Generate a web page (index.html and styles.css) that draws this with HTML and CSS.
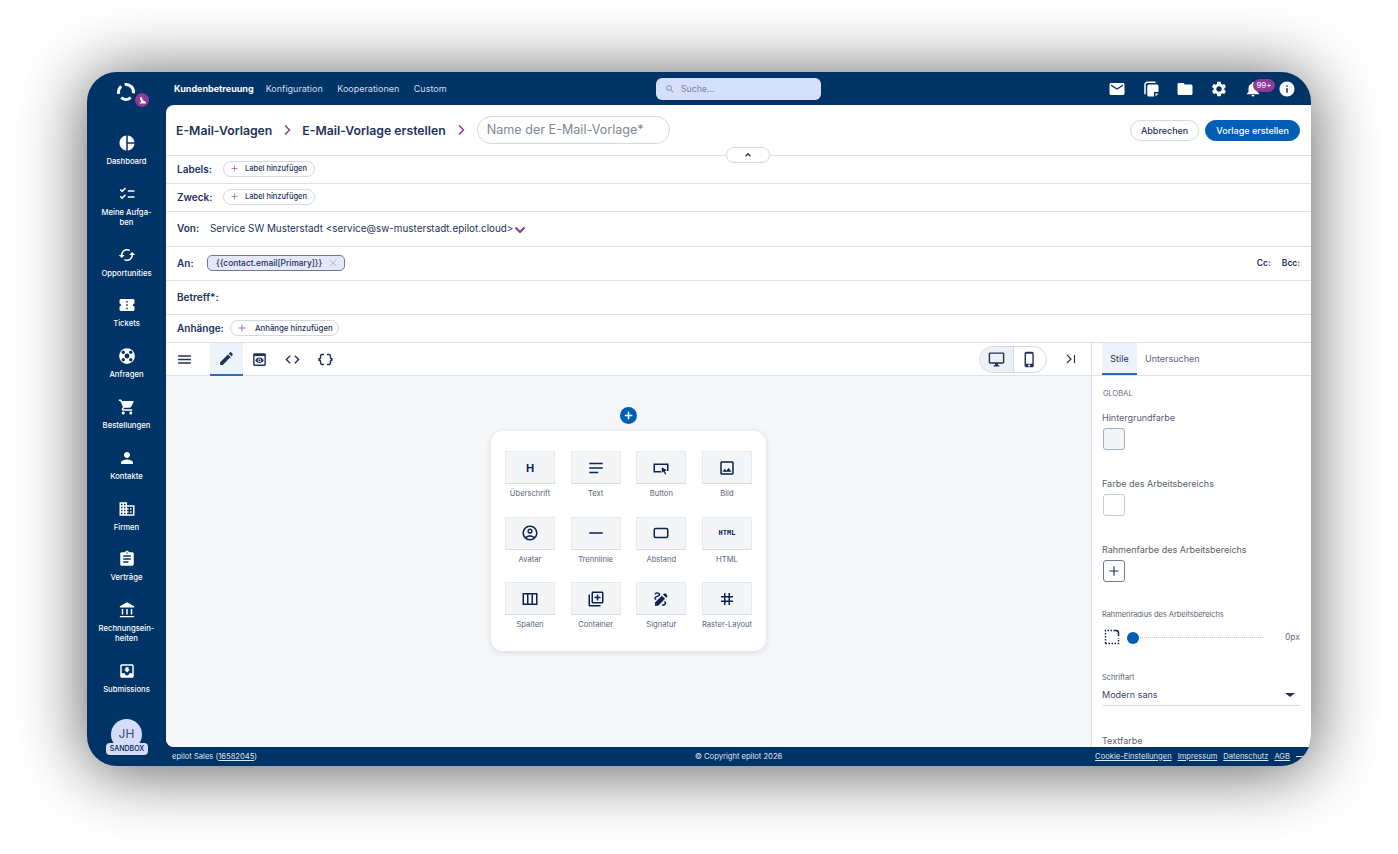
FILE: index.html
```html
<!doctype html>
<html lang="de">
<head>
    <meta charset="UTF-8">
    <title>E-Mail-Vorlage erstellen</title>
    <link rel="stylesheet" href="styles.css">
</head>
<body>
<div class="window">
    <aside class="sidebar">
        <div class="logo">
            <svg class="logo-ring" viewBox="0 0 24 24"><path d="M10.700 4.600A7.500 7.500 0 0 1 19.400 13.300M16.800 17.700A7.500 7.500 0 0 1 7.200 17.700M4.800 13.900A7.500 7.500 0 0 1 7.200 6.300"/></svg>
            <span class="logo-badge"><svg viewBox="0 0 24 24"><path d="M6 3h4l3 8 7 4c2 1 2 5 0 5H6c-2 0-2-3 0-3l3-1-4-9z"/></svg></span>
        </div>
        <nav class="nav">
            <a class="nav-item"><svg viewBox="0 0 24 24"><path d="M11 2v20c-5.070-.5-9-4.790-9-10s3.930-9.500 9-10zm2.030 0v8.990H22c-.47-4.740-4.240-8.520-8.970-8.990zm0 11.010V22c4.740-.47 8.500-4.250 8.970-8.990h-8.970z"/></svg><span>Dashboard</span></a>
            <a class="nav-item"><svg class="line-icon" viewBox="0 0 24 24"><path d="M3 6l2.500 2.500L10 4M3 15l2.500 2.500L10 13M13 8h9M13 16h9"/></svg><span>Meine Aufga-<br>ben</span></a>
            <a class="nav-item"><svg viewBox="0 0 24 24"><path d="M19 8l-4 4h3c0 3.310-2.690 6-6 6-1.010 0-1.970-.25-2.800-.7l-1.460 1.460C8.970 19.540 10.430 20 12 20c4.420 0 8-3.580 8-8h3l-4-4zM6 12c0-3.310 2.690-6 6-6 1.010 0 1.970.25 2.800.7l1.460-1.460C15.030 4.460 13.570 4 12 4c-4.420 0-8 3.580-8 8H1l4 4 4-4H6z"/></svg><span>Opportunities</span></a>
            <a class="nav-item"><svg viewBox="0 0 24 24"><path d="M22 10V6c0-1.110-.9-2-2-2H4c-1.100 0-1.990.89-1.990 2v4c1.100 0 1.990.9 1.990 2s-.89 2-2 2v4c0 1.100.9 2 2 2h16c1.100 0 2-.9 2-2v-4c-1.100 0-2-.9-2-2s.9-2 2-2zm-9 7.500h-2v-2h2v2zm0-4.500h-2v-2h2v2zm0-4.500h-2v-2h2v2z"/></svg><span>Tickets</span></a>
            <a class="nav-item"><svg viewBox="0 0 24 24"><circle cx="12" cy="12" r="10.500" fill="#fff"/><g fill="#003366"><circle cx="12" cy="12" r="3.200"/><circle cx="7" cy="7" r="2.200"/><circle cx="17" cy="7" r="2.200"/><circle cx="7" cy="17" r="2.200"/><circle cx="17" cy="17" r="2.200"/></g></svg><span>Anfragen</span></a>
            <a class="nav-item"><svg viewBox="0 0 24 24"><path d="M7 18c-1.100 0-1.990.9-1.990 2S5.900 22 7 22s2-.9 2-2-.9-2-2-2zM1 2v2h2l3.600 7.590-1.350 2.450c-.16.28-.25.61-.25.96 0 1.100.9 2 2 2h12v-2H7.420c-.14 0-.25-.11-.25-.25l.03-.12.9-1.630h7.450c.75 0 1.410-.41 1.750-1.030l3.580-6.490c.08-.14.12-.31.12-.48 0-.55-.45-1-1-1H5.210l-.94-2H1zm16 16c-1.100 0-1.990.9-1.990 2s.89 2 1.990 2 2-.9 2-2-.9-2-2-2z"/></svg><span>Bestellungen</span></a>
            <a class="nav-item"><svg viewBox="0 0 24 24"><path d="M12 12c2.210 0 4-1.790 4-4s-1.790-4-4-4-4 1.790-4 4 1.790 4 4 4zm0 2c-2.670 0-8 1.340-8 4v2h16v-2c0-2.660-5.330-4-8-4z"/></svg><span>Kontakte</span></a>
            <a class="nav-item"><svg viewBox="0 0 24 24"><path d="M12 7V3H2v18h20V7H12zM6 19H4v-2h2v2zm0-4H4v-2h2v2zm0-4H4V9h2v2zm0-4H4V5h2v2zm4 12H8v-2h2v2zm0-4H8v-2h2v2zm0-4H8V9h2v2zm0-4H8V5h2v2zm10 12h-8v-2h2v-2h-2v-2h2v-2h-2V9h8v10zm-2-8h-2v2h2v-2zm0 4h-2v2h2v-2z"/></svg><span>Firmen</span></a>
            <a class="nav-item"><svg viewBox="0 0 24 24"><path d="M19 3h-4.180C14.400 1.840 13.300 1 12 1c-1.300 0-2.400.84-2.820 2H5c-1.100 0-2 .9-2 2v14c0 1.100.9 2 2 2h14c1.100 0 2-.9 2-2V5c0-1.100-.9-2-2-2zm-7 0c.55 0 1 .45 1 1s-.45 1-1 1-1-.45-1-1 .45-1 1-1zm2 14H7v-2h7v2zm3-4H7v-2h10v2zm0-4H7V7h10v2z"/></svg><span>Verträge</span></a>
            <a class="nav-item"><svg viewBox="0 0 24 24"><path d="M12 1.500L2.500 7v1.500h19V7zM5 10.500V18h2v-7.500zM11 10.500V18h2v-7.500zM17 10.500V18h2v-7.500zM2.500 20h19v1.500h-19z"/></svg><span>Rechnungsein-<br>heiten</span></a>
            <a class="nav-item"><svg viewBox="0 0 24 24"><path d="M19 3H4.990c-1.110 0-1.980.89-1.980 2L3 19c0 1.100.88 2 1.990 2H19c1.100 0 2-.9 2-2V5c0-1.110-.9-2-2-2zm0 12h-4c0 1.660-1.350 3-3 3s-3-1.340-3-3H4.990V5H19v10zm-3-5h-2V7h-4v3H8l4 4 4-4z"/></svg><span>Submissions</span></a>
        </nav>
        <div class="avatar">JH<span class="sandbox">SANDBOX</span></div>
    </aside>

    <header class="topbar">
        <div class="topnav">
            <a class="topnav-active">Kundenbetreuung</a>
            <a>Konfiguration</a>
            <a>Kooperationen</a>
            <a>Custom</a>
        </div>
        <div class="search">
            <svg viewBox="0 0 24 24"><path d="M15.500 14h-.79l-.28-.27C15.410 12.590 16 11.110 16 9.500 16 5.910 13.090 3 9.500 3S3 5.910 3 9.500 5.910 16 9.500 16c1.610 0 3.090-.59 4.230-1.570l.27.28v.79l5 4.990L20.490 19l-4.990-5zm-6 0C7.010 14 5 11.990 5 9.500S7.010 5 9.500 5 14 7.010 14 9.500 11.990 14 9.500 14z"/></svg>
            <span>Suche...</span>
        </div>
        <div class="top-icons">
            <svg viewBox="0 0 24 24"><path d="M20 4H4c-1.100 0-2 .9-2 2v12c0 1.100.9 2 2 2h16c1.100 0 2-.9 2-2V6c0-1.100-.9-2-2-2zm0 4l-8 5-8-5V6l8 5 8-5v2z"/></svg>
            <svg viewBox="0 0 24 24"><path d="M7 2h11v2H7C6 4 5 5 5 6v13H3V6c0-2 2-4 4-4zM9 6h11a2 2 0 0 1 2 2v8h-6v6H9a2 2 0 0 1-2-2V8a2 2 0 0 1 2-2zM18 18h4l-4 4z"/></svg>
            <svg viewBox="0 0 24 24"><path d="M10 4H4c-1.100 0-1.990.9-1.990 2L2 18c0 1.100.9 2 2 2h16c1.100 0 2-.9 2-2V8c0-1.100-.9-2-2-2h-8l-2-2z"/></svg>
            <svg viewBox="0 0 24 24"><path d="M19.140 12.940c.04-.3.06-.61.06-.94 0-.32-.02-.64-.07-.94l2.030-1.580c.18-.14.23-.41.12-.61l-1.920-3.320c-.12-.22-.37-.29-.59-.22l-2.390.96c-.5-.38-1.030-.7-1.620-.94l-.36-2.540c-.04-.24-.24-.41-.48-.41h-3.840c-.24 0-.43.17-.47.41l-.36 2.540c-.59.24-1.130.57-1.620.94l-2.390-.96c-.22-.08-.47 0-.59.22L2.740 8.870c-.12.21-.08.47.12.61l2.030 1.580c-.05.3-.09.63-.09.94s.02.64.07.94l-2.030 1.580c-.18.14-.23.41-.12.61l1.920 3.320c.12.22.37.29.59.22l2.390-.96c.5.38 1.030.7 1.620.94l.36 2.540c.05.24.24.41.48.41h3.840c.24 0 .44-.17.47-.41l.36-2.540c.59-.24 1.130-.56 1.620-.94l2.390.96c.22.08.47 0 .59-.22l1.920-3.320c.12-.22.07-.47-.12-.61l-2.010-1.580zM12 15.600c-1.980 0-3.600-1.620-3.600-3.600s1.620-3.600 3.600-3.600 3.600 1.620 3.600 3.600-1.620 3.600-3.600 3.600z"/></svg>
            <span class="bell">
                <svg viewBox="0 0 24 24"><path d="M12 22c1.100 0 2-.9 2-2h-4c0 1.100.89 2 2 2zm6-6v-5c0-3.070-1.640-5.640-4.500-6.320V4c0-.83-.67-1.500-1.500-1.500s-1.500.67-1.500 1.500v.68C7.630 5.360 6 7.920 6 11v5l-2 2v1h16v-1l-2-2z"/></svg>
                <span class="bell-badge">99+</span>
            </span>
            <svg viewBox="0 0 24 24"><path d="M12 2C6.480 2 2 6.480 2 12s4.480 10 10 10 10-4.480 10-10S17.520 2 12 2zm1 15h-2v-6h2v6zm0-8h-2V7h2v2z"/></svg>
        </div>
    </header>

    <main class="main">
        <div class="title-row">
            <span class="crumb">E-Mail-Vorlagen</span>
            <svg class="crumb-arrow" viewBox="0 0 24 24"><path d="M8 3l9 9-9 9"/></svg>
            <span class="crumb">E-Mail-Vorlage erstellen</span>
            <svg class="crumb-arrow" viewBox="0 0 24 24"><path d="M8 3l9 9-9 9"/></svg>
            <div class="name-input">Name der E-Mail-Vorlage*</div>
            <div class="actions">
                <button class="btn">Abbrechen</button>
                <button class="btn btn-primary">Vorlage erstellen</button>
            </div>
            <button class="collapse"><svg viewBox="0 0 24 24"><path d="M6 15l6-6 6 6"/></svg></button>
        </div>
        <div class="row row-28">
            <span class="row-label">Labels:</span>
            <button class="chip"><svg viewBox="0 0 24 24"><path d="M12 4v16M4 12h16"/></svg>Label hinzufügen</button>
        </div>
        <div class="row row-28">
            <span class="row-label">Zweck:</span>
            <button class="chip"><svg viewBox="0 0 24 24"><path d="M12 4v16M4 12h16"/></svg>Label hinzufügen</button>
        </div>
        <div class="row row-35">
            <span class="row-label von-label">Von:</span>
            <span class="row-value">Service SW Musterstadt &lt;service@sw-musterstadt.epilot.cloud&gt;</span>
            <svg class="von-arrow" viewBox="0 0 24 24"><path d="M3 7l9 9 9-9"/></svg>
        </div>
        <div class="row row-34">
            <span class="row-label an-label">An:</span>
            <span class="recipient">{{contact.email[Primary]}}<svg viewBox="0 0 24 24"><path d="M4 4l16 16M20 4L4 20"/></svg></span>
            <span class="cc">Cc:</span>
            <span class="cc bcc">Bcc:</span>
        </div>
        <div class="row row-34">
            <span class="row-label">Betreff*:</span>
        </div>
        <div class="row row-28">
            <span class="row-label anh-label">Anhänge:</span>
            <button class="chip chip-wide"><svg viewBox="0 0 24 24"><path d="M12 4v16M4 12h16"/></svg>Anhänge hinzufügen</button>
        </div>

        <div class="editor">
            <div class="editor-left">
                <div class="toolbar">
                    <span class="tool tool-menu"><svg viewBox="0 0 24 24"><path d="M3 18h18v-2H3v2zm0-5h18v-2H3v2zm0-7v2h18V6H3z"/></svg></span>
                    <span class="tool tool-active"><svg viewBox="0 0 24 24"><path d="M3 17.250V21h3.750L17.810 9.940l-3.750-3.750L3 17.250zM20.710 7.040c.39-.39.39-1.020 0-1.410l-2.340-2.340c-.39-.39-1.020-.39-1.410 0l-1.830 1.830 3.750 3.750 1.830-1.830z"/></svg></span>
                    <span class="tool"><svg viewBox="0 0 24 24"><path d="M19 3H5c-1.110 0-2 .9-2 2v14c0 1.100.89 2 2 2h14c1.100 0 2-.9 2-2V5c0-1.100-.89-2-2-2zm0 16H5V7h14v12zm-5.500-6c0 .83-.67 1.500-1.500 1.500s-1.500-.67-1.500-1.500.67-1.500 1.500-1.500 1.500.67 1.500 1.500zM12 9c-2.730 0-5.060 1.660-6 4 .94 2.340 3.270 4 6 4s5.060-1.660 6-4c-.94-2.340-3.270-4-6-4zm0 6.500c-1.380 0-2.500-1.120-2.500-2.500s1.120-2.500 2.500-2.500 2.500 1.120 2.500 2.500-1.120 2.500-2.500 2.500z"/></svg></span>
                    <span class="tool"><svg viewBox="0 0 24 24"><path d="M9.400 16.600L4.800 12l4.600-4.600L8 6l-6 6 6 6 1.400-1.400zm5.200 0l4.600-4.600-4.600-4.600L16 6l6 6-6 6-1.400-1.400z"/></svg></span>
                    <span class="tool"><svg viewBox="0 0 24 24"><path d="M4 7v2c0 .55-.45 1-1 1H2v4h1c.55 0 1 .45 1 1v2c0 1.650 1.350 3 3 3h3v-2H7c-.55 0-1-.45-1-1v-2c0-1.300-.84-2.420-2-2.830v-.34C5.160 11.420 6 10.300 6 9V7c0-.55.45-1 1-1h3V4H7C5.350 4 4 5.350 4 7zm17 3c-.55 0-1-.45-1-1V7c0-1.650-1.350-3-3-3h-3v2h3c.55 0 1 .45 1 1v2c0 1.300.84 2.420 2 2.830v.34c-1.160.41-2 1.520-2 2.830v2c0 .55-.45 1-1 1h-3v2h3c1.650 0 3-1.350 3-3v-2c0-.55.45-1 1-1h1v-4h-1z"/></svg></span>
                    <div class="device-toggle">
                        <span class="device device-active"><svg viewBox="0 0 24 24"><path d="M21 2H3c-1.100 0-2 .9-2 2v12c0 1.100.9 2 2 2h7v2H8v2h8v-2h-2v-2h7c1.100 0 2-.9 2-2V4c0-1.100-.9-2-2-2zm0 14H3V4h18v12z"/></svg></span>
                        <span class="device"><svg viewBox="0 0 24 24"><path d="M15.500 1h-8C6.120 1 5 2.120 5 3.500v17C5 21.880 6.120 23 7.500 23h8c1.380 0 2.500-1.120 2.500-2.500v-17C18 2.120 16.880 1 15.500 1zm-4 21c-.83 0-1.500-.67-1.500-1.500s.67-1.500 1.500-1.500 1.500.67 1.500 1.500-.67 1.500-1.500 1.500zm4.500-4H7V4h9v14z"/></svg></span>
                    </div>
                    <span class="panel-toggle"><svg viewBox="0 0 24 24"><path d="M5 5l7 7-7 7M18 5v14"/></svg></span>
                </div>
                <div class="canvas">
                    <span class="add-btn"><svg viewBox="0 0 24 24"><path d="M12 5v14M5 12h14"/></svg></span>
                    <div class="blocks">
                        <div class="block"><span class="tile tile-h">H</span><span>Überschrift</span></div>
                        <div class="block"><span class="tile"><svg class="stroke" viewBox="0 0 24 24"><path d="M3 6h18M3 12h18M3 18h12"/></svg></span><span>Text</span></div>
                        <div class="block"><span class="tile"><svg viewBox="0 0 24 24"><path d="M2 6h20v10h-2V8H4v8h8v2H2zM13 11l7 4-3 1 2 4-1.500.7-2-4-2.500 2z"/></svg></span><span>Button</span></div>
                        <div class="block"><span class="tile"><svg viewBox="0 0 24 24"><path d="M19 5v14H5V5h14m0-2H5c-1.100 0-2 .9-2 2v14c0 1.100.9 2 2 2h14c1.100 0 2-.9 2-2V5c0-1.100-.9-2-2-2zm-4.860 8.860l-3 3.870L9 13.140 6 17h12l-3.860-5.140z"/></svg></span><span>Bild</span></div>
                        <div class="block"><span class="tile"><svg viewBox="0 0 24 24"><path d="M12 2C6.480 2 2 6.480 2 12s4.480 10 10 10 10-4.480 10-10S17.520 2 12 2zM7.350 18.500C8.660 17.560 10.260 17 12 17s3.340.56 4.650 1.500c-1.310.94-2.910 1.500-4.650 1.500s-3.340-.56-4.650-1.500zm10.790-1.380C16.450 15.800 14.320 15 12 15s-4.450.8-6.140 2.120C4.700 15.730 4 13.950 4 12c0-4.420 3.580-8 8-8s8 3.580 8 8c0 1.950-.7 3.730-1.860 5.120zM12 6c-1.930 0-3.500 1.570-3.500 3.500S10.070 13 12 13s3.500-1.570 3.500-3.500S13.930 6 12 6zm0 5c-.83 0-1.500-.67-1.500-1.500S11.170 8 12 8s1.500.67 1.500 1.500S12.830 11 12 11z"/></svg></span><span>Avatar</span></div>
                        <div class="block"><span class="tile"><svg class="stroke" viewBox="0 0 24 24"><path d="M3 12h18"/></svg></span><span>Trennlinie</span></div>
                        <div class="block"><span class="tile"><svg class="stroke" viewBox="0 0 24 24"><rect x="3" y="6" width="18" height="12" rx="2"/></svg></span><span>Abstand</span></div>
                        <div class="block"><span class="tile tile-html">HTML</span><span>HTML</span></div>
                        <div class="block"><span class="tile"><svg class="stroke" viewBox="0 0 24 24"><path d="M3 5h18v14H3zM9 5v14M15 5v14"/></svg></span><span>Spalten</span></div>
                        <div class="block"><span class="tile"><svg viewBox="0 0 24 24"><path d="M4 6H2v14c0 1.100.9 2 2 2h14v-2H4V6zm16-4H8c-1.100 0-2 .9-2 2v12c0 1.100.9 2 2 2h12c1.100 0 2-.9 2-2V4c0-1.100-.9-2-2-2zm0 14H8V4h12v12zm-7-2h2v-3h3V9h-3V6h-2v3h-3v2h3z"/></svg></span><span>Container</span></div>
                        <div class="block"><span class="tile"><svg viewBox="0 0 24 24"><path d="M18.850 10.390l1.060-1.060c.78-.78.78-2.050 0-2.830L18.500 5.090c-.78-.78-2.050-.78-2.830 0l-1.060 1.060 4.240 4.240zm-5.660-2.830L4 16.760V21h4.240l9.190-9.190-4.240-4.250zM19 17.500c0 2.190-2.540 3.500-5 3.500-.55 0-1-.45-1-1s.45-1 1-1c1.540 0 3-.73 3-1.500 0-.47-.48-.87-1.230-1.200l1.480-1.480c1.070.63 1.750 1.470 1.750 2.680zM4.580 13.350C3.610 12.790 3 12.060 3 11c0-1.800 1.890-2.630 3.560-3.360C7.590 7.180 9 6.560 9 6c0-.41-.78-1-2-1-1.260 0-1.800.61-1.830.64-.35.41-.98.46-1.400.12-.41-.34-.49-.95-.15-1.380C3.730 4.240 4.760 3 7 3s4 1.320 4 3c0 1.870-1.930 2.720-3.640 3.470C6.420 9.880 5 10.500 5 11c0 .31.43.6 1.070.86l-1.490 1.490z"/></svg></span><span>Signatur</span></div>
                        <div class="block"><span class="tile"><svg viewBox="0 0 24 24"><path d="M20 10V8h-4V4h-2v4h-4V4H8v4H4v2h4v4H4v2h4v4h2v-4h4v4h2v-4h4v-2h-4v-4h4zm-6 4h-4v-4h4v4z"/></svg></span><span>Raster-Layout</span></div>
                    </div>
                </div>
            </div>
            <aside class="panel">
                <div class="tabs">
                    <span class="tab tab-active">Stile</span>
                    <span class="tab">Untersuchen</span>
                </div>
                <div class="panel-body">
                    <div class="global">GLOBAL</div>
                    <div class="field-label">Hintergrundfarbe</div>
                    <div class="swatch swatch-grey"></div>
                    <div class="field-label">Farbe des Arbeitsbereichs</div>
                    <div class="swatch"></div>
                    <div class="field-label">Rahmenfarbe des Arbeitsbereichs</div>
                    <div class="swatch swatch-add"><svg viewBox="0 0 24 24"><path d="M12 4v16M4 12h16"/></svg></div>
                    <div class="small-label radius-label">Rahmenradius des Arbeitsbereichs</div>
                    <div class="slider-row">
                        <svg class="radius-icon" viewBox="0 0 16 16"><path class="dots" d="M1.500 14.500V1.500H8M1.500 14.500H14.500V9"/><path d="M9.500 1.500h2.500a2.500 2.500 0 0 1 2.500 2.500v3"/></svg>
                        <span class="slider"><span class="thumb"></span></span>
                        <span class="slider-value">0px</span>
                    </div>
                    <div class="small-label font-label">Schriftart</div>
                    <div class="select">Modern sans<span class="caret"></span></div>
                    <div class="field-label text-label">Textfarbe</div>
                </div>
            </aside>
        </div>
    </main>

    <footer class="footer">
        <span class="footer-left">epilot Sales (<u>16582045</u>)</span>
        <span class="footer-center">© Copyright epilot 2026</span>
        <span class="footer-links"><u>Cookie-Einstellungen</u><u>Impressum</u><u>Datenschutz</u><u>AGB</u><i class="footer-dash"></i></span>
    </footer>
</div>
</body>
</html>
```

FILE: styles.css
```css
* {
    box-sizing: border-box;
}
html, body {
    margin: 0;
    height: 100%;
}
body {
    background: #fff;
    padding: 72px 87px 88px;
    font-family: "Inter", "Liberation Sans", sans-serif;
    color: #22315a;
    overflow: hidden;
}
svg {
    fill: currentColor;
    display: block;
}
button {
    font-family: inherit;
    cursor: pointer;
}

.window {
    height: 694px;
    border-radius: 30px;
    overflow: hidden;
    background: #003366;
    box-shadow: 0 4px 68px rgba(0, 0, 0, .66);
    display: grid;
    grid-template-columns: 79px 1fr;
    grid-template-rows: 33px 1fr 19px;
}

/* sidebar */
.sidebar {
    grid-row: 1 / 4;
    display: flex;
    flex-direction: column;
    align-items: center;
    color: #fff;
    padding-bottom: 16px;
}
.logo {
    height: 33px;
    width: 100%;
    position: relative;
}
.logo-ring {
    width: 24px;
    height: 24px;
    position: absolute;
    left: 27px;
    top: 8px;
    fill: none;
    stroke: #fff;
    stroke-width: 3;
}
.logo-badge {
    position: absolute;
    left: 48px;
    top: 21px;
    width: 14px;
    height: 14px;
    border-radius: 50%;
    background: #8e3a96;
    padding: 2.500px;
}
.nav {
    padding-top: 28px;
    display: flex;
    flex-direction: column;
    gap: 16.800px;
    width: 100%;
}
.nav-item {
    display: flex;
    flex-direction: column;
    align-items: center;
    gap: 4px;
    font-size: 7.700px;
    line-height: 10px;
    font-weight: 500;
    text-align: center;
}
.nav-item svg {
    width: 18px;
    height: 20px;
}
.nav-item .line-icon {
    fill: none;
    stroke: #fff;
    stroke-width: 2;
}
.avatar {
    margin-top: auto;
    width: 31px;
    height: 31px;
    border-radius: 50%;
    background: #d5dcfa;
    color: #3d4a6b;
    font-size: 12px;
    line-height: 29px;
    text-align: center;
    position: relative;
}
.sandbox {
    position: absolute;
    left: -5px;
    top: 24px;
    width: 42px;
    height: 12px;
    border-radius: 4px;
    background: #d5dcfa;
    color: #00224d;
    font-size: 7px;
    font-weight: 500;
    line-height: 12px;
}

/* top bar */
.topbar {
    position: relative;
    display: flex;
    align-items: center;
    padding-right: 15px;
    color: #fff;
}
.topnav {
    display: flex;
    gap: 14.500px;
    padding-left: 8px;
    font-size: 9px;
    color: #d5dff0;
}
.topnav-active {
    color: #fff;
    font-weight: 700;
    margin-right: -2.500px;
}
.search {
    position: absolute;
    left: 490px;
    top: 6px;
    width: 165px;
    height: 22px;
    border-radius: 6px;
    background: #d5dffa;
    color: #7b86a3;
    display: flex;
    align-items: center;
    gap: 6px;
    padding-left: 9px;
    font-size: 8.700px;
}
.search svg {
    width: 10px;
    height: 10px;
}
.top-icons {
    margin-left: auto;
    display: flex;
    align-items: center;
    gap: 16px;
}
.top-icons svg {
    width: 18px;
    height: 18px;
}
.bell {
    position: relative;
    display: block;
    width: 18px;
    height: 18px;
}
.bell-badge {
    position: absolute;
    left: 9px;
    top: -1px;
    width: 22px;
    height: 13px;
    border-radius: 7px;
    background: #8e3a96;
    font-size: 8px;
    line-height: 13px;
    text-align: center;
}

/* main area */
.main {
    background: #fff;
    border-radius: 8px 0 0 8px;
    display: flex;
    flex-direction: column;
    min-height: 0;
    overflow: hidden;
}
.title-row {
    position: relative;
    height: 51px;
    flex: none;
    border-bottom: 1px solid #dfe1e5;
    display: flex;
    align-items: center;
    padding: 0 11px 0 10px;
}
.crumb {
    font-size: 12.250px;
    font-weight: 600;
}
.crumb-arrow {
    width: 12px;
    height: 12px;
    margin: 0 9px;
    fill: none;
    stroke: #8e3a96;
    stroke-width: 3;
}
.name-input {
    width: 193px;
    height: 28px;
    margin-left: 1px;
    border: 1px solid #d5d8de;
    border-radius: 14px;
    padding-left: 9px;
    font-size: 12.600px;
    line-height: 26px;
    color: #7f8798;
}
.actions {
    margin-left: auto;
    display: flex;
    gap: 6px;
}
.btn {
    height: 21px;
    padding: 0 10px;
    border: 1px solid #d5d8de;
    border-radius: 11px;
    background: #fff;
    color: #22315a;
    font-size: 9px;
    font-weight: 500;
}
.btn-primary {
    background: #005eb4;
    border-color: #005eb4;
    color: #fff;
}
.collapse {
    position: absolute;
    left: 560px;
    top: 42px;
    width: 44px;
    height: 16px;
    padding: 0;
    background: #fff;
    border: 1px solid #d5d8de;
    border-radius: 8px;
    display: flex;
    align-items: center;
    justify-content: center;
}
.collapse svg {
    width: 10px;
    height: 10px;
    fill: none;
    stroke: #22315a;
    stroke-width: 3;
}
.row {
    flex: none;
    display: flex;
    align-items: center;
    padding: 0 11px 2px;
    border-bottom: 1px solid #dfe1e5;
}
.row-28 { height: 28px; }
.row-34 { height: 34px; }
.row-35 { height: 35px; }
.row-label {
    font-size: 10px;
    font-weight: 600;
    width: 46px;
}
.von-label { width: 33px; }
.an-label { width: 30px; }
.anh-label { width: 53px; }
.row-value {
    font-size: 9.900px;
}
.von-arrow {
    width: 12px;
    height: 12px;
    margin: 3px 0 0 1px;
    fill: none;
    stroke: #8e3a96;
    stroke-width: 4;
}
.chip {
    height: 16px;
    width: 92px;
    padding: 0 0 0 6px;
    background: #fff;
    border: 1px solid #d5d8de;
    border-radius: 8px;
    display: flex;
    align-items: center;
    gap: 6px;
    font-size: 7.500px;
    font-weight: 500;
    color: #22315a;
    white-space: nowrap;
}
.chip svg {
    width: 9px;
    height: 9px;
    fill: none;
    stroke: #a0559f;
    stroke-width: 2;
}
.chip-wide {
    width: 109px;
    gap: 8px;
    font-size: 7.800px;
}
.chip-wide svg {
    width: 10px;
    height: 10px;
}
.recipient {
    height: 16px;
    width: 138px;
    border: 1px solid #6f7a92;
    border-radius: 5px;
    background: #e4e8f8;
    display: flex;
    align-items: center;
    padding-left: 8px;
    gap: 6px;
    font-size: 8.400px;
    font-weight: 500;
    white-space: nowrap;
}
.recipient svg {
    width: 10px;
    height: 10px;
    fill: none;
    stroke: #a6adbd;
    stroke-width: 2;
}
.cc {
    font-size: 8.500px;
    font-weight: 600;
    margin-left: auto;
}
.bcc {
    margin-left: 11px;
}

/* editor */
.editor {
    flex: 1;
    min-height: 0;
    display: flex;
}
.editor-left {
    flex: 1;
    min-width: 0;
    display: flex;
    flex-direction: column;
    border-right: 1px solid #dfe1e5;
}
.toolbar {
    height: 33px;
    flex: none;
    display: flex;
    align-items: center;
    padding-right: 13px;
    border-bottom: 1px solid #dfe1e5;
}
.tool {
    width: 33px;
    height: 33px;
    display: flex;
    align-items: center;
    justify-content: center;
}
.tool svg {
    width: 17px;
    height: 17px;
}
.tool-menu {
    margin-left: 2px;
    margin-right: 9px;
}
.tool-active {
    background: #ecf3fa;
    border-bottom: 2px solid #2a6fb5;
}
.device-toggle {
    margin-left: auto;
    width: 68px;
    height: 27px;
    border: 1px solid #d5d8de;
    border-radius: 14px;
    display: flex;
    overflow: hidden;
}
.device {
    flex: 1;
    display: flex;
    align-items: center;
    justify-content: center;
}
.device svg {
    width: 17px;
    height: 17px;
}
.device-active {
    background: #ecf1f8;
    border-right: 1px solid #d5d8de;
}
.panel-toggle {
    margin-left: 17px;
    width: 14px;
}
.panel-toggle svg {
    width: 14px;
    height: 14px;
    fill: none;
    stroke: #22315a;
    stroke-width: 2;
}
.canvas {
    flex: 1;
    min-height: 0;
    background: #f5f6f7;
    display: flex;
    flex-direction: column;
    align-items: center;
    padding-top: 31px;
    gap: 7px;
}
.add-btn {
    width: 17px;
    height: 17px;
    border-radius: 50%;
    background: #005eb4;
    padding: 2px;
}
.add-btn svg {
    fill: none;
    stroke: #fff;
    stroke-width: 3;
}
.blocks {
    width: 275px;
    height: 220px;
    background: #fff;
    border-radius: 12px;
    box-shadow: 0 1px 6px rgba(0, 20, 60, .12);
    padding: 20px 14px 0;
    display: grid;
    grid-template-columns: repeat(4, 50px);
    grid-auto-rows: 65.500px;
    justify-content: space-between;
}
.block {
    display: flex;
    flex-direction: column;
    align-items: center;
    font-size: 7.600px;
    line-height: 10px;
    color: #5a6478;
    gap: 5px;
    white-space: nowrap;
}
.tile {
    width: 50px;
    height: 33px;
    background: #f3f5f7;
    border: 1px solid #e6e9ed;
    border-bottom-color: #d9dce1;
    display: flex;
    align-items: center;
    justify-content: center;
    color: #0b2350;
}
.tile svg {
    width: 18px;
    height: 18px;
}
.tile svg.stroke {
    fill: none;
    stroke: currentColor;
    stroke-width: 2;
}
.tile-h {
    font-size: 11px;
    font-weight: 700;
}
.tile-html {
    font-size: 7px;
    font-weight: 800;
    font-family: "DejaVu Sans Mono", monospace;
}

/* right panel */
.panel {
    width: 219px;
    flex: none;
    display: flex;
    flex-direction: column;
    min-height: 0;
}
.tabs {
    height: 33px;
    flex: none;
    display: flex;
    padding-left: 10px;
    border-bottom: 1px solid #dfe1e5;
}
.tab {
    padding: 0 8px;
    font-size: 9px;
    line-height: 32px;
    color: #5a6478;
}
.tab-active {
    width: 35px;
    padding: 0;
    text-align: center;
    color: #22315a;
    background: #ecf3fa;
    border-bottom: 2px solid #2a6fb5;
}
.panel-body {
    flex: 1;
    padding: 0 11px 0 11px;
    overflow: hidden;
}
.global {
    font-size: 7.500px;
    line-height: 10px;
    margin-top: 13px;
    color: #6b7280;
}
.field-label {
    font-size: 9px;
    line-height: 12px;
    margin-top: 13px;
    margin-left: -1px;
    color: #5a6070;
}
.swatch {
    width: 22px;
    height: 22px;
    margin: 4px 0 28px;
    border: 1px solid #c4ccd6;
    border-radius: 3px;
    background: #fff;
}
.swatch-grey {
    background: #f3f5f6;
    border-color: #9fb0c0;
}
.swatch-add {
    border-color: #6f7a92;
    padding: 3px;
}
.swatch-add svg {
    fill: none;
    stroke: #22315a;
    stroke-width: 2;
}
.small-label {
    font-size: 7.400px;
    line-height: 10px;
    margin-left: -1px;
    color: #5a6070;
}
.radius-label {
    margin-top: 0;
}
.slider-row {
    display: flex;
    align-items: center;
    margin-top: 9px;
    padding-left: 1px;
}
.radius-icon {
    width: 16px;
    height: 16px;
    fill: none;
    stroke: #0b2350;
    stroke-width: 1.500;
}
.radius-icon .dots {
    stroke-dasharray: 1.500 1.500;
}
.slider {
    position: relative;
    margin-left: 7px;
    width: 136px;
    border-top: 1px dotted #c2c6cc;
}
.thumb {
    position: absolute;
    left: 0;
    top: -6px;
    width: 12px;
    height: 12px;
    border-radius: 50%;
    background: #005eb4;
}
.slider-value {
    margin-left: auto;
    font-size: 8.500px;
    color: #6b7280;
}
.font-label {
    margin-top: 28px;
}
.select {
    margin-top: 3px;
    height: 20px;
    font-size: 9px;
    line-height: 17px;
    text-indent: -1px;
    border-bottom: 1px solid #d5d8de;
    color: #3a4666;
    position: relative;
}
.caret {
    position: absolute;
    right: 5px;
    top: 7px;
    border: 5px solid transparent;
    border-top: 4px solid #22315a;
    border-bottom: 0;
}
.text-label {
    margin-top: 29px;
}

/* footer */
.footer {
    position: relative;
    display: flex;
    align-items: center;
    justify-content: space-between;
    padding: 0 6px 1px;
    font-size: 7.600px;
    color: #dfe6f2;
}
.footer-center {
    position: absolute;
    left: 529px;
}
.footer-links {
    display: flex;
    align-items: center;
    gap: 6px;
}
.footer-dash {
    width: 10px;
    border-top: 1px solid #dfe6f2;
    margin-right: -1px;
}
```
